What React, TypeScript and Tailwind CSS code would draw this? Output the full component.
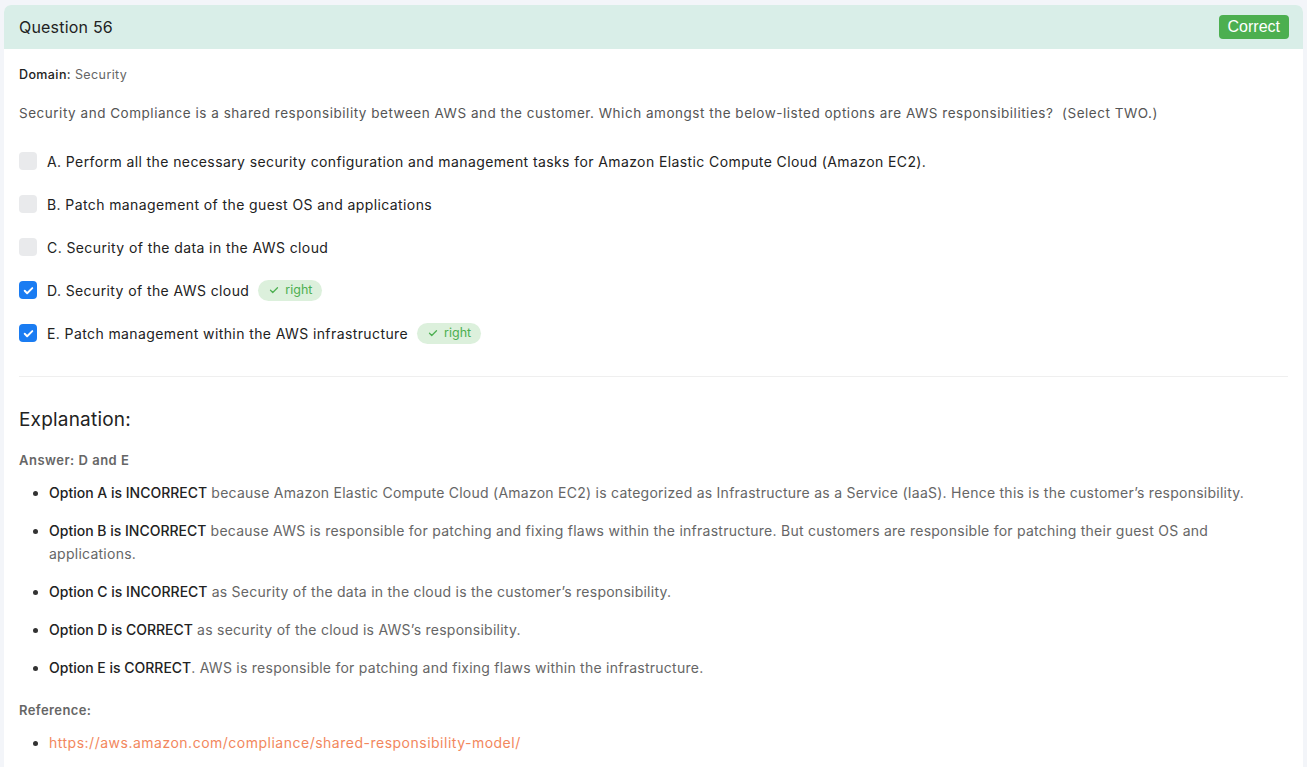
import React from "react";

const options = [
  { label: "A. Perform all the necessary security configuration and management tasks for Amazon Elastic Compute Cloud (Amazon EC2).", checked: false },
  { label: "B. Patch management of the guest OS and applications", checked: false },
  { label: "C. Security of the data in the AWS cloud", checked: false },
  { label: "D. Security of the AWS cloud", checked: true },
  { label: "E. Patch management within the AWS infrastructure", checked: true },
];

const explanations: { b: string; t: string }[] = [
  { b: "Option A is INCORRECT", t: " because Amazon Elastic Compute Cloud (Amazon EC2) is categorized as Infrastructure as a Service (IaaS). Hence this is the customer’s responsibility." },
  { b: "Option B is INCORRECT", t: " because AWS is responsible for patching and fixing flaws within the infrastructure. But customers are responsible for patching their guest OS and applications." },
  { b: "Option C is INCORRECT", t: " as Security of the data in the cloud is the customer’s responsibility." },
  { b: "Option D is CORRECT", t: " as security of the cloud is AWS’s responsibility." },
  { b: "Option E is CORRECT", t: ". AWS is responsible for patching and fixing flaws within the infrastructure." },
];

function Check({ size = 12, w = 3.5 }: { size?: number; w?: number }) {
  return (
    <svg width={size} height={size} viewBox="0 0 24 24" fill="none" stroke="currentColor" strokeWidth={w} strokeLinecap="round" strokeLinejoin="round">
      <path d="M5 12.5l4.5 4.5L19 7.5" />
    </svg>
  );
}

export default function App() {
  return (
    <div className="min-h-[767px] bg-[#f3f5f9] px-[4px] pt-[5px] font-['Inter',sans-serif]">
      <div className="rounded-t-[7px] bg-white overflow-hidden">
        <div className="h-[44px] bg-[#d9eee8] flex items-center justify-between pl-[15px] pr-[14px]">
          <span className="text-[16px] text-[#222] tracking-[0.2px]">Question 56</span>
          <span className="bg-[#4caf50] text-white text-[16px] leading-[24px] px-[9px] rounded-[4px] font-['Liberation_Sans',sans-serif]">Correct</span>
        </div>
        <div className="px-[15px] pb-[60px]">
          <div className="pt-[17px] text-[12.5px] text-[#222] leading-[18px] tracking-[0.4px]">
            <span className="font-medium">Domain:</span> <span className="text-[#666]">Security</span>
          </div>
          <div className="mt-[19px] text-[13.5px] text-[#555] leading-[20px] tracking-[0.52px]">
            Security and Compliance is a shared responsibility between AWS and the customer. Which amongst the below-listed options are AWS responsibilities?&nbsp; (Select TWO.)
          </div>
          <div className="mt-[29px] flex flex-col gap-[25px]">
            {options.map((o) => (
              <div key={o.label} className="flex items-center h-[18px]">
                {o.checked ? (
                  <span className="w-[18px] h-[18px] rounded-[4px] bg-[#1a7cf2] text-white flex items-center justify-center"><Check size={13} /></span>
                ) : (
                  <span className="w-[18px] h-[18px] rounded-[4px] bg-[#e9eaec]" />
                )}
                <span className="ml-[10px] text-[14px] text-[#222] tracking-[0.4px]">{o.label}</span>
                {o.checked && (
                  <span className="ml-[9px] h-[21px] px-[10px] rounded-full bg-[#dcf0dc] text-[#4caf50] text-[12.5px] flex items-center gap-[5px]">
                    <Check size={12} w={2.5} />right
                  </span>
                )}
              </div>
            ))}
          </div>
          <div className="mt-[34px] h-px bg-[#efefef]" />
          <div className="mt-[30px] text-[19px] text-[#222] leading-[26px] tracking-[0.2px]">Explanation:</div>
          <div className="mt-[18px] text-[13px] font-semibold text-[#666] tracking-[0.5px]">Answer: D and E</div>
          <ul className="mt-[10px] list-disc pl-[30px] pr-[10px] text-[14px] leading-[23px] text-[#666] flex flex-col gap-[15px] tracking-[0.25px]">
            {explanations.map((e) => (
              <li key={e.b} className="marker:text-[#333]">
                <span className="text-[#222] font-medium tracking-[0px]">{e.b}</span>{e.t}
              </li>
            ))}
          </ul>
          <div className="mt-[22px] text-[13px] font-semibold text-[#666] tracking-[0.4px]">Reference:</div>
          <ul className="mt-[11px] list-disc pl-[30px] text-[14px] leading-[23px] tracking-[0.5px]">
            <li className="marker:text-[#333]">
              <a className="text-[#f2875d]">https://aws.amazon.com/compliance/shared-responsibility-model/</a>
            </li>
          </ul>
        </div>
      </div>
    </div>
  );
}
